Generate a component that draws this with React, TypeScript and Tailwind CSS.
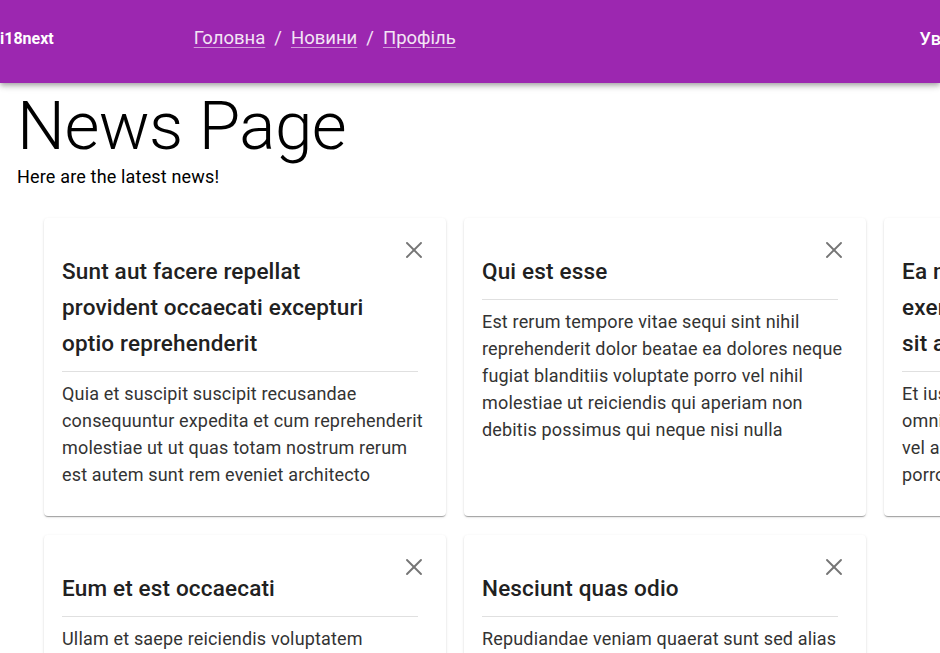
import { X } from "lucide-react"

const posts = [
  {
    title: "Sunt aut facere repellat provident occaecati excepturi optio reprehenderit",
    body: "Quia et suscipit suscipit recusandae consequuntur expedita et cum reprehenderit molestiae ut ut quas totam nostrum rerum est autem sunt rem eveniet architecto",
  },
  {
    title: "Qui est esse",
    body: "Est rerum tempore vitae sequi sint nihil reprehenderit dolor beatae ea dolores neque fugiat blanditiis voluptate porro vel nihil molestiae ut reiciendis qui aperiam non debitis possimus qui neque nisi nulla",
  },
  {
    title: "Ea molestias quasi exercitationem repellat qui ipsa sit aut",
    body: "Et iusto sed quo iure voluptatem occaecati omnis eligendi aut ad voluptatem doloribus vel accusantium quis pariatur molestiae porro eius odio et labore et velit aut",
  },
  {
    title: "Eum et est occaecati",
    body: "Ullam et saepe reiciendis voluptatem adipisci sit amet autem assumenda provident rerum culpa quis hic commodi nesciunt rem tenetur doloremque ipsam iure quis sunt voluptatem rerum illo velit",
  },
  {
    title: "Nesciunt quas odio",
    body: "Repudiandae veniam quaerat sunt sed alias aut fugiat sit autem sed est voluptatem omnis possimus esse voluptatibus quis est aut tenetur dolor neque",
  },
]

const NewsCard = ({ title, body }: { title: string; body: string }) => {
  return (
    <div className="w-[402px] shrink-0 rounded bg-white px-[18px] pt-[17px] pb-[28px] shadow-[0_2px_1px_-1px_rgba(0,0,0,0.2),0_1px_1px_0_rgba(0,0,0,0.14),0_1px_3px_0_rgba(0,0,0,0.12)]">
      <div className="flex items-start">
        <h2 className="mt-[18px] flex-1 pr-4 text-[22.5px] leading-[36px] font-medium tracking-[0.0075em] text-[#212121]">{title}</h2>
        <button className="mt-[1px] flex h-7 w-7 items-center justify-center text-[#757575]">
          <X size={28} strokeWidth={1.6} />
        </button>
      </div>
      <div className="mt-[10px] mr-[10px] border-t border-[#e0e0e0]" />
      <p className="mt-2 text-[18px] leading-[27px] tracking-[0.00938em] text-[#333]">{body}</p>
    </div>
  )
}

export default function App() {
  return (
    <div className="h-screen w-full overflow-hidden bg-white font-['Roboto',sans-serif]">
      <header className="relative z-10 h-[83px] w-full bg-[#9c27b0] text-white shadow-[0_2px_4px_-1px_rgba(0,0,0,0.2),0_4px_5px_0_rgba(0,0,0,0.14),0_1px_10px_0_rgba(0,0,0,0.12)]">
        <div className="flex h-[77px] w-[1000px] items-center">
          <span className="ml-[-43px] shrink-0 text-[16px] font-bold">react-i18next</span>
          <nav className="ml-[140px] flex items-center gap-[9px] text-[18.5px] text-[#f3e5f5]">
            <a className="underline decoration-[rgba(243,229,245,0.6)] underline-offset-[3px]">Головна</a>
            <span>/</span>
            <a className="underline decoration-[rgba(243,229,245,0.6)] underline-offset-[3px]">Новини</a>
            <span>/</span>
            <a className="underline decoration-[rgba(243,229,245,0.6)] underline-offset-[3px]">Профіль</a>
          </nav>
          <span className="ml-auto mr-[25px] text-[18px] font-medium">Увійти</span>
        </div>
      </header>

      <main className="px-[17px]">
        <h1 className="mt-[6px] text-[67.5px] leading-[74px] font-light tracking-[-0.00833em] text-black">News Page</h1>
        <p className="mt-[2px] text-[18px] leading-6 tracking-[0.00938em] text-black">Here are the latest news!</p>

        <div className="mt-[29px] ml-[27px] grid w-[1250px] grid-cols-[402px_402px_402px] gap-x-[18px] gap-y-[19px]">
          {posts.map((p) => (
            <NewsCard key={p.title} title={p.title} body={p.body} />
          ))}
        </div>
      </main>
    </div>
  )
}
